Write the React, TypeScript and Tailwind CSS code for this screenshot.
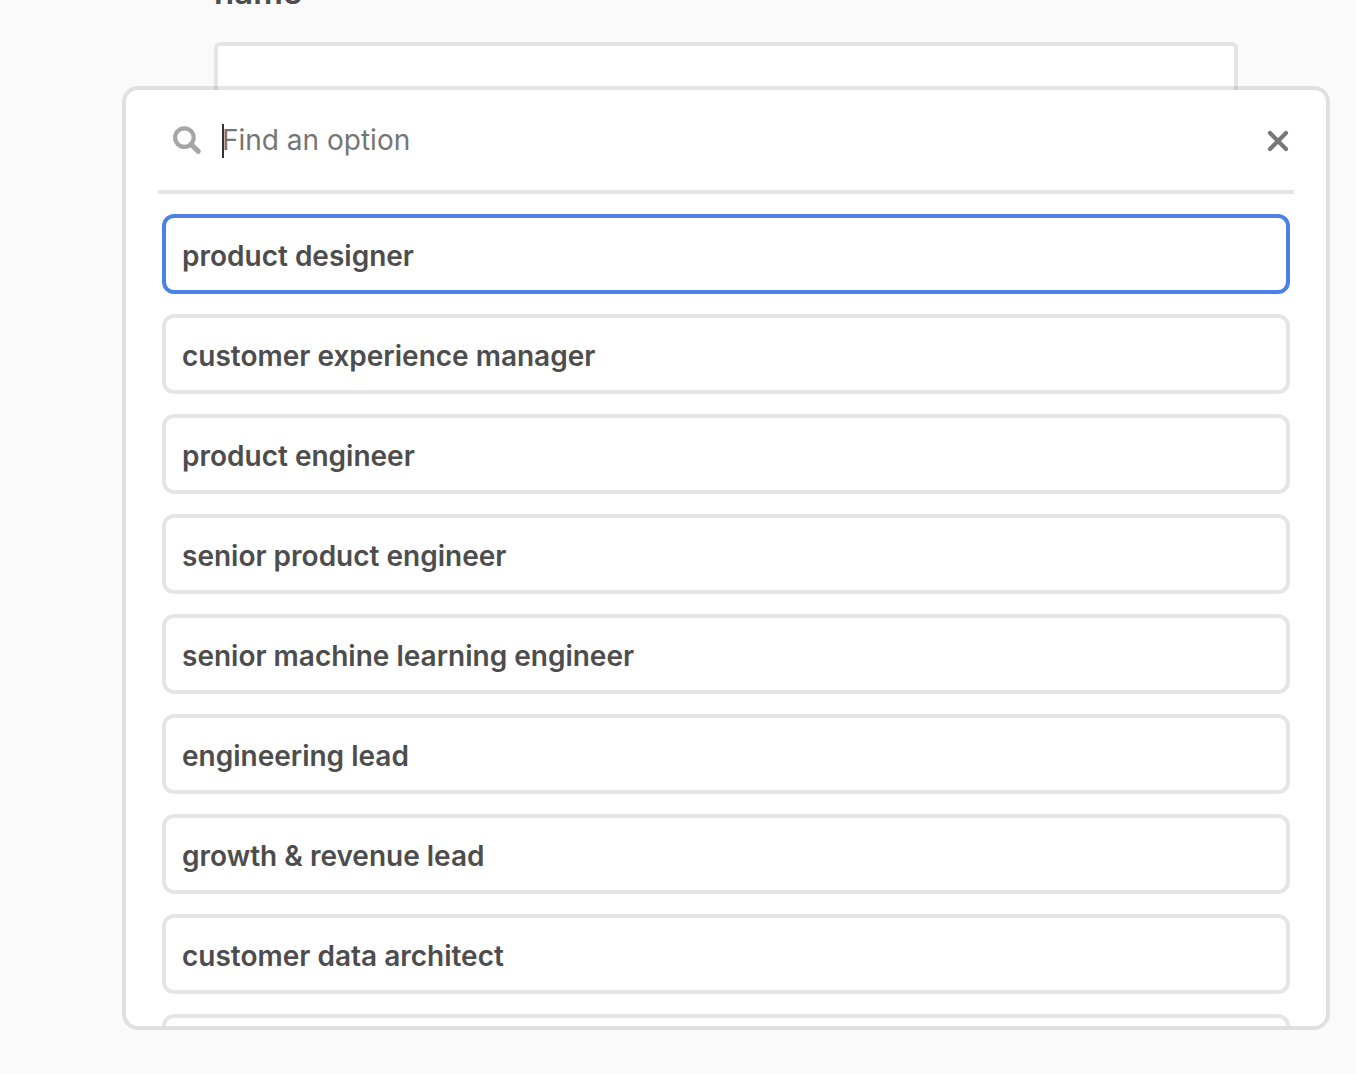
import { useState } from "react";

const options = [
  "product designer",
  "customer experience manager",
  "product engineer",
  "senior product engineer",
  "senior machine learning engineer",
  "engineering lead",
  "growth & revenue lead",
  "customer data architect",
  "",
];

export default function App() {
  const [query, setQuery] = useState("");
  const [active, setActive] = useState(options[0]);
  const shown = options.filter((o) => o.includes(query.toLowerCase()));

  return (
    <main className="relative h-screen overflow-hidden bg-[#fafafa] font-['Inter',sans-serif] text-[#4d4d4d]">
      <div className="-mt-[26px] mr-[118px] ml-[214px]">
        <label htmlFor="name" className="block text-[33px] leading-9 font-semibold">
          name
        </label>
        <input
          id="name"
          type="text"
          className="mt-8 block h-[76px] w-full rounded-md border-4 border-[#e4e4e4] bg-white px-4 outline-none"
        />
      </div>

      <section
        role="dialog"
        aria-label="Find an option"
        className="absolute top-[86px] right-[26px] bottom-11 left-[122px] flex flex-col overflow-hidden rounded-2xl border-4 border-black/10 bg-white bg-clip-padding px-8"
      >
        <div className="flex h-[104px] shrink-0 items-center border-b-4 border-[#e5e5e5] pr-1 pl-[14px]">
          <svg
            viewBox="0 0 30 30"
            className="mr-5 size-[30px] shrink-0"
            fill="none"
            stroke="#a6a6a6"
            aria-hidden="true"
          >
            <circle cx="12.4" cy="12.6" r="9.3" strokeWidth="4.2" />
            <path d="M19 19.2L26.3 26.4" strokeWidth="5" strokeLinecap="round" />
          </svg>
          <div className="relative flex min-w-0 flex-1 items-end">
            <span className="absolute left-0 h-[34px] w-0.5 bg-[#333333]" />
            <input
              type="text"
              aria-label="Find an option"
              placeholder="Find an option"
              value={query}
              onChange={(e) => setQuery(e.target.value)}
              className="w-full bg-transparent text-[28px] leading-9 outline-none placeholder:text-[#757575]"
            />
          </div>
          <button type="button" aria-label="Close" className="flex size-6 shrink-0 items-center justify-center">
            <svg
              viewBox="0 0 24 24"
              className="size-6"
              fill="none"
              stroke="#787878"
              strokeWidth="4.2"
              strokeLinecap="round"
              aria-hidden="true"
            >
              <path d="M4 5L20 21M20 5L4 21" />
            </svg>
          </button>
        </div>
        <ul className="flex min-h-0 flex-1 flex-col gap-5 overflow-y-auto px-1 pt-5 [scrollbar-width:none]">
          {shown.map((option) => (
            <li key={option} className="shrink-0">
              <button
                type="button"
                aria-label={option || "Empty option"}
                onClick={() => setActive(option)}
                className={`flex h-20 w-full items-center rounded-xl border-4 bg-white px-4 pt-1 text-left text-[28px] leading-9 font-semibold ${
                  option === active ? "border-[#4a82e8]" : "border-[#e5e5e5]"
                }`}
              >
                {option}
              </button>
            </li>
          ))}
        </ul>
      </section>
    </main>
  );
}
